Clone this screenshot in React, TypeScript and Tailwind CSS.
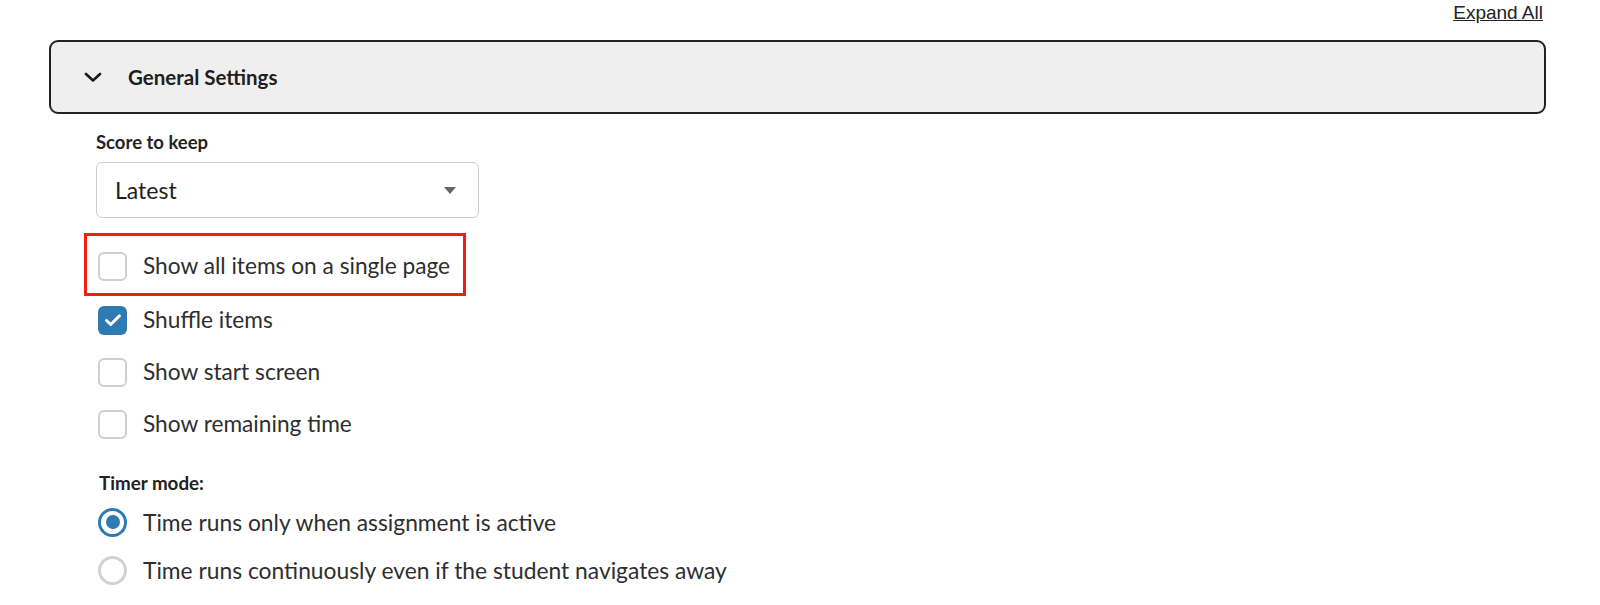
import React from "react";

function Checkbox({ checked }: { checked?: boolean }) {
  if (checked) {
    return (
      <div className="w-[29px] h-[29px] rounded-[6px] bg-[#2d7bb2] flex items-center justify-center shrink-0">
        <svg width="22" height="22" viewBox="0 0 24 24" fill="none" stroke="white" strokeWidth="3.2" strokeLinecap="round" strokeLinejoin="round">
          <path d="M5 12.5l4.5 4.5L19 7.5" />
        </svg>
      </div>
    );
  }
  return <div className="w-[29px] h-[29px] rounded-[6px] border-2 border-[#cfcfcf] bg-white shrink-0" />;
}

function Radio({ checked }: { checked?: boolean }) {
  if (checked) {
    return (
      <div className="w-[29px] h-[29px] rounded-full border-[3px] border-[#2d7bb2] flex items-center justify-center shrink-0">
        <div className="w-[14px] h-[14px] rounded-full bg-[#2d7bb2]" />
      </div>
    );
  }
  return <div className="w-[29px] h-[29px] rounded-full border-[3px] border-[#d2d2d2] shrink-0" />;
}

export default function App() {
  return (
    <div className="w-[1600px] h-[605px] bg-white overflow-hidden font-['Lato',sans-serif] text-[#2e2e2e]">
      <div className="pl-[49px] pr-[54px]">
        <div className="h-[40px] flex justify-end">
          <a className="mt-[2px] mr-[3px] leading-[22px] text-[19px] underline text-[#222] font-['Liberation_Sans',Arial,sans-serif]">
            Expand All
          </a>
        </div>
        <div className="h-[74px] rounded-[9px] border-2 border-[#222] bg-[#efefef] flex items-center pl-[33px]">
          <svg width="18" height="10" viewBox="0 0 18 10" fill="none" stroke="#1a1a1a" strokeWidth="2.6" strokeLinecap="round" strokeLinejoin="round">
            <path d="M2 2l7 6.5L16 2" />
          </svg>
          <span className="ml-[26px] text-[20.5px] font-bold text-[#1e1e1e]">General Settings</span>
        </div>
        <div className="pl-[47px]">
          <div className="mt-[18px] h-[20px] leading-[20px] text-[18.5px] font-bold text-[#222]">Score to keep</div>
          <div className="mt-[10px] w-[383px] h-[56px] rounded-[6px] border border-[#cdcdcd] flex items-center justify-between pl-[18px] pr-[22px]">
            <span className="text-[23px] text-[#1e1e1e] pt-[1px]">Latest</span>
            <svg width="12" height="7" viewBox="0 0 12 7">
              <path d="M0 0h12L6 7z" fill="#666" />
            </svg>
          </div>
          <div className="mt-[15px] ml-[-12px] mb-[-2px] w-[382px] h-[63px] border-[3px] border-[#f01e14] flex items-center pl-[11px] pt-[4px]">
            <Checkbox />
            <span className="ml-[16px] text-[22.7px]">Show all items on a single page</span>
          </div>
          <div className="h-[52px] flex items-center pl-[2px]">
            <Checkbox checked />
            <span className="ml-[16px] text-[22.7px]">Shuffle items</span>
          </div>
          <div className="h-[52px] flex items-center pl-[2px]">
            <Checkbox />
            <span className="ml-[16px] text-[22.7px]">Show start screen</span>
          </div>
          <div className="h-[52px] flex items-center pl-[2px]">
            <Checkbox />
            <span className="ml-[16px] text-[22.7px]">Show remaining time</span>
          </div>
          <div className="mt-[23px] h-[20px] leading-[20px] text-[18.8px] font-bold text-[#222] pl-[3px]">Timer mode:</div>
          <div className="mt-[5px] h-[48px] flex items-center pl-[2px]">
            <Radio checked />
            <span className="ml-[16px] text-[22.8px]">Time runs only when assignment is active</span>
          </div>
          <div className="h-[48px] flex items-center pl-[2px]">
            <Radio />
            <span className="ml-[16px] text-[22.8px]">Time runs continuously even if the student navigates away</span>
          </div>
        </div>
      </div>
    </div>
  );
}
